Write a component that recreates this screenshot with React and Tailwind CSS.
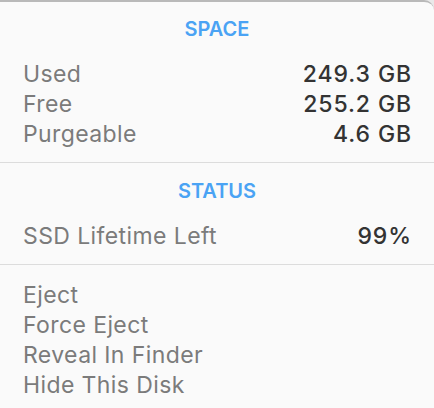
const SPACE = [
  { label: 'Used', value: '249.3 GB' },
  { label: 'Free', value: '255.2 GB' },
  { label: 'Purgeable', value: '4.6 GB' },
];

const ACTIONS = ['Eject', 'Force Eject', 'Reveal In Finder', 'Hide This Disk'];

export default function App() {
  return (
    <div className="w-[434px] h-[408px] bg-[#e9e9e9] overflow-hidden" style={{ fontFamily: 'Inter, "Noto Sans", sans-serif' }}>
      <div className="h-full bg-[#fafafa] border-t-2 border-[#b9b9b9] rounded-tr-[10px]">
        <section className="pt-[13px] pb-[13px]">
          <SectionTitle>SPACE</SectionTitle>
          <div className="px-[23px]">
            {SPACE.map((r) => (
              <Row key={r.label} label={r.label} value={r.value} />
            ))}
          </div>
        </section>

        <div className="h-px bg-[#dcdcdc]" />

        <section className="pt-[14px] pb-[13px]">
          <SectionTitle>STATUS</SectionTitle>
          <div className="px-[23px]">
            <Row label="SSD Lifetime Left" value="99%" />
          </div>
        </section>

        <div className="h-px bg-[#dcdcdc]" />

        <section className="pt-[15px] px-[23px]">
          {ACTIONS.map((a) => (
            <div key={a} className="text-[23px] leading-[30px] text-[#7b7b7b] tracking-[0.4px]">
              {a}
            </div>
          ))}
        </section>
      </div>
    </div>
  );
}

function SectionTitle({ children }) {
  return (
    <div className="text-center text-[20px] leading-[28px] font-semibold text-[#4aa3f4] mb-4">
      {children}
    </div>
  );
}

function Row({ label, value }) {
  return (
    <div className="flex items-center justify-between text-[23px] leading-[30px]">
      <span className="text-[#7b7b7b] tracking-[0.4px]">{label}</span>
      <span className="text-[#333333] font-medium tracking-[0.9px] -mr-[1px]">{value}</span>
    </div>
  );
}
